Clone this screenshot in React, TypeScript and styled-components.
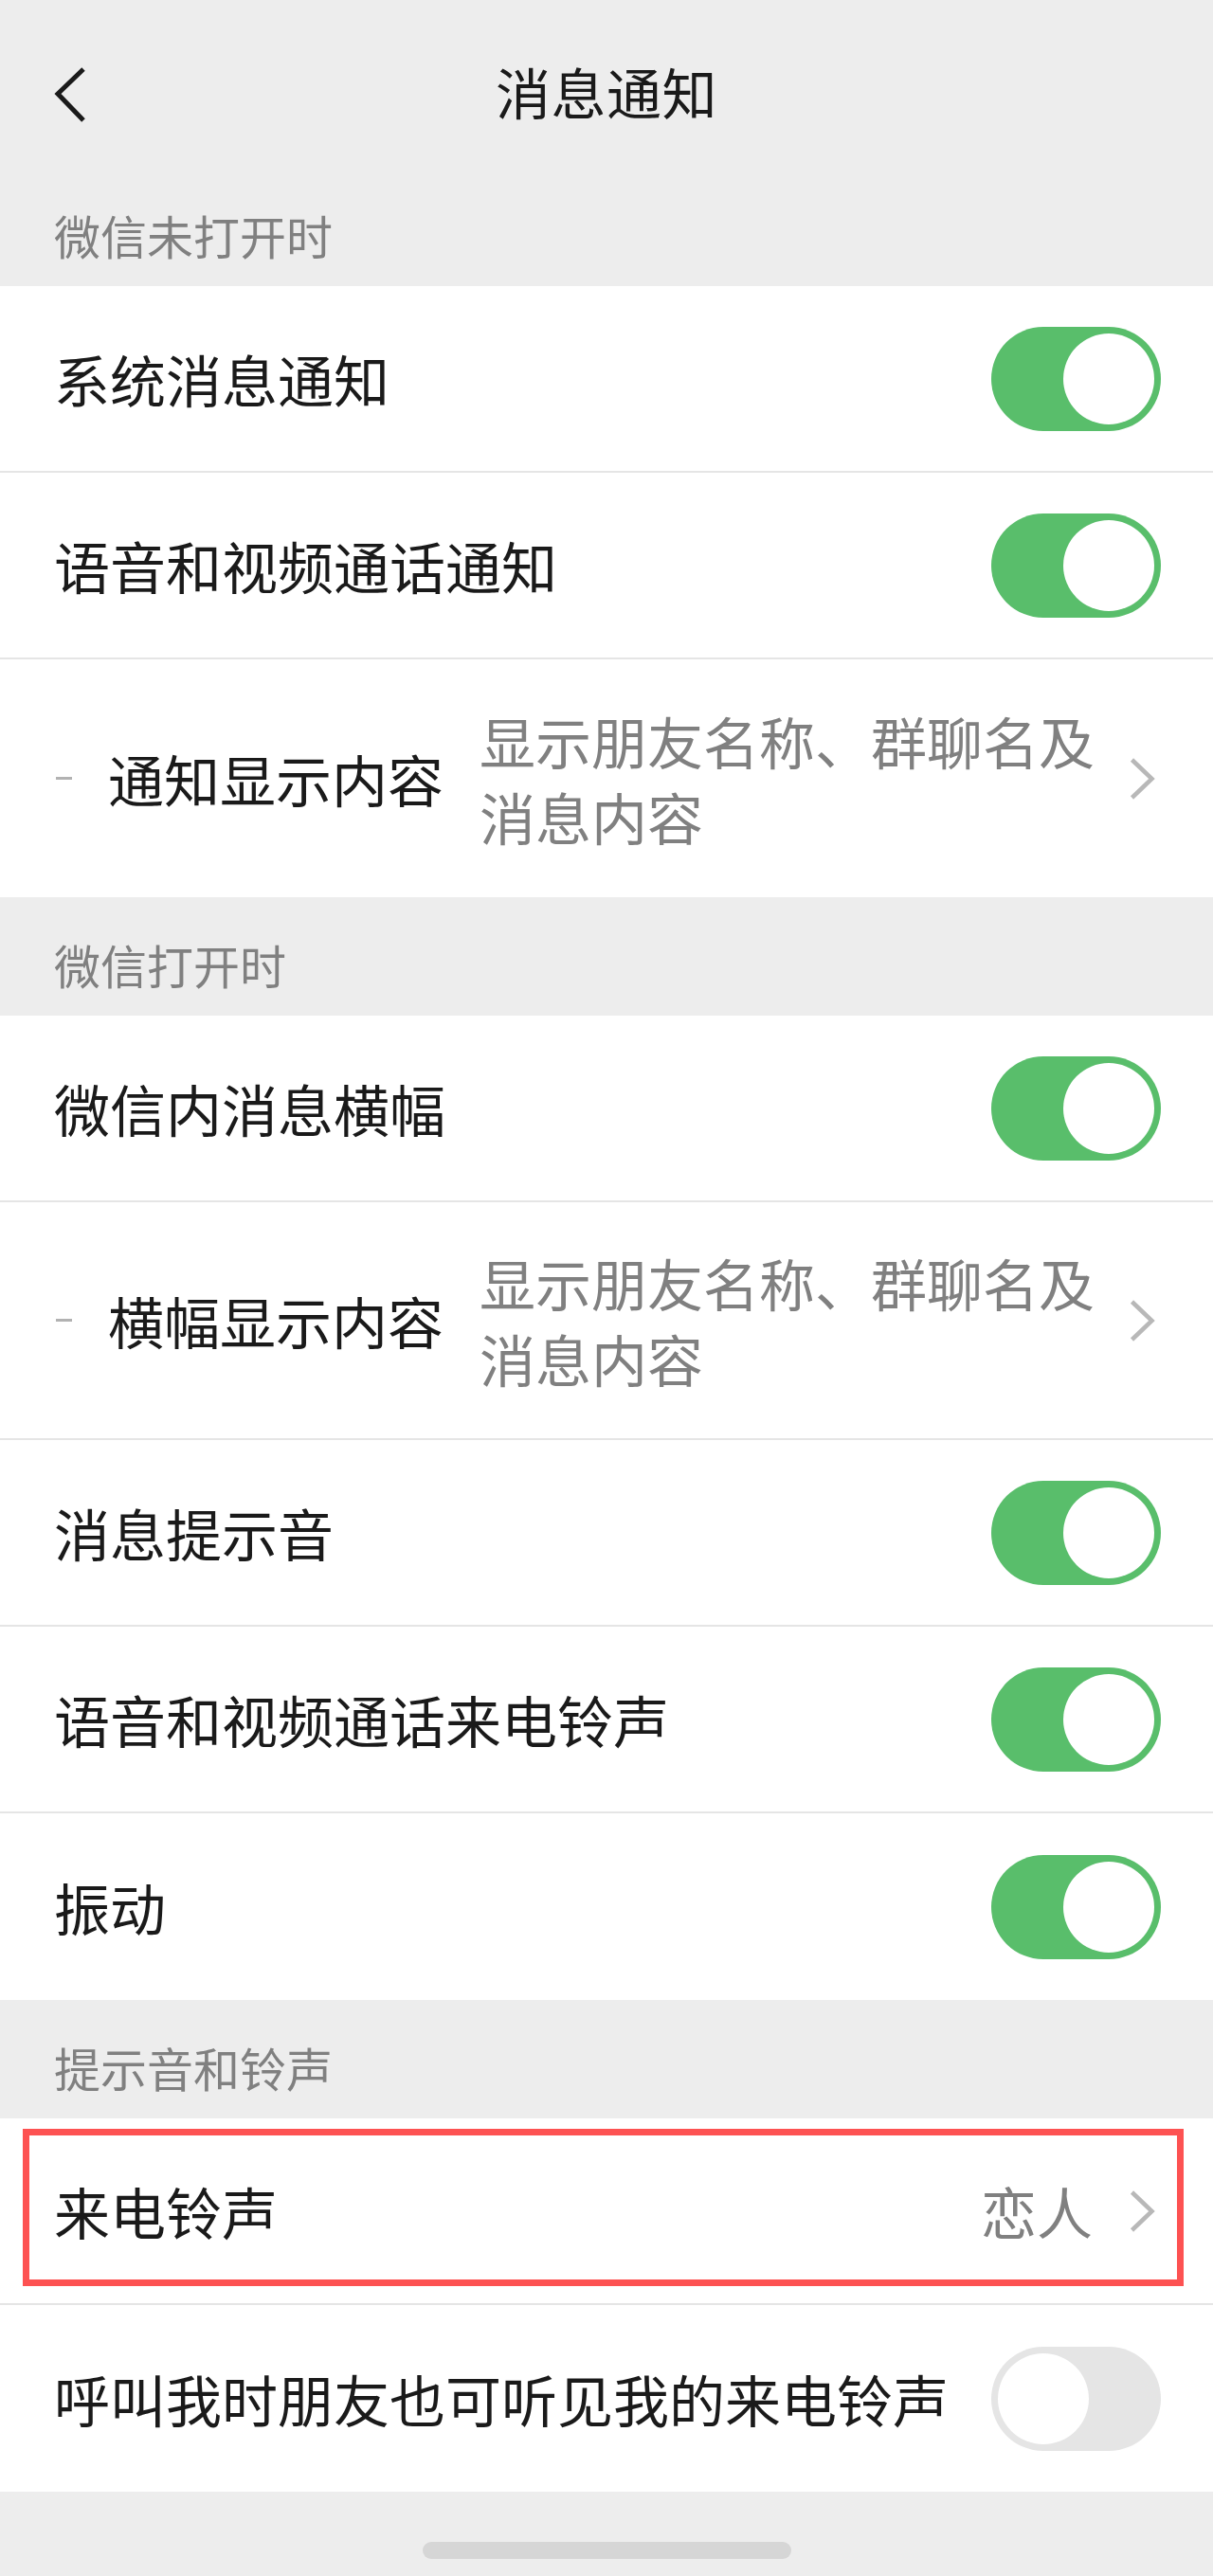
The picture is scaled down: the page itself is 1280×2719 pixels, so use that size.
import styled, { createGlobalStyle } from "styled-components"

const GlobalStyle = createGlobalStyle`
    html, body {
        margin: 0;
        padding: 0;
        background: #ededed;
    }
    * {
        box-sizing: border-box;
    }
`

const Page = styled.div`
    width: 1280px;
    min-height: 2719px;
    background: #ededed;
    font-family: "Noto Sans CJK SC", "Noto Sans", sans-serif;
    color: #1a1a1a;
`

const NavBar = styled.div`
    height: 177px;
    display: grid;
    grid-template-columns: 1fr auto 1fr;
    align-items: start;
    padding-top: 60px;
`

const BackButton = styled.svg`
    margin-left: 40px;
    display: block;
`

const Title = styled.div`
    font-size: 58px;
    line-height: 72px;
    letter-spacing: 0.5px;
`

const SectionHeader = styled.div`
    height: 125px;
    padding: 46px 0 0 57px;
    font-size: 49px;
    line-height: 49px;
    color: #808080;
`

const Group = styled.div`
    background: #ffffff;
`

const Row = styled.div<{ $tall?: boolean }>`
    position: relative;
    display: flex;
    align-items: center;
    min-height: ${p => (p.$tall ? 251 : 197)}px;
    padding: 0 55px 0 57px;
    border-bottom: 2px solid #e5e5e5;
    &:last-child {
        border-bottom: none;
    }
`

const Label = styled.div`
    font-size: 59px;
    line-height: 80px;
    white-space: nowrap;
`

const Dash = styled.span`
    width: 17px;
    height: 3px;
    margin: 0 38px 0 2px;
    background: #b2b2b2;
    flex-shrink: 0;
`

const Value = styled.div<{ $wide?: boolean }>`
    font-size: 59px;
    line-height: 80px;
    color: #808080;
    margin-left: ${p => (p.$wide ? "38px" : "auto")};
    width: ${p => (p.$wide ? "666px" : "auto")};
`

const Chevron = styled.svg<{ $auto?: boolean }>`
    display: block;
    flex-shrink: 0;
    margin-left: ${p => (p.$auto ? "auto" : "37px")};
    margin-right: 5px;
`

const Track = styled.div<{ $on: boolean }>`
    margin-left: auto;
    flex-shrink: 0;
    width: 179px;
    height: 110px;
    border-radius: 55px;
    padding: 7px;
    background: ${p => (p.$on ? "#59be6b" : "#e5e5e5")};
    display: flex;
    justify-content: ${p => (p.$on ? "flex-end" : "flex-start")};
    align-items: center;
`

const Knob = styled.div`
    width: 96px;
    height: 96px;
    border-radius: 50%;
    background: #ffffff;
`

const Highlight = styled.div`
    position: absolute;
    top: 11px;
    left: 24px;
    right: 31px;
    height: 166px;
    border: 7px solid #fd5252;
    pointer-events: none;
`

const Footer = styled.div`
    height: 91px;
    padding-top: 53px;
    display: flex;
    justify-content: center;
`

const HomeBar = styled.div`
    width: 389px;
    height: 18px;
    border-radius: 9px;
    background: #d6d6d6;
`

function Switch({ on }: { on: boolean }) {
    return (
        <Track $on={on}>
            <Knob />
        </Track>
    )
}

function Arrow({ auto }: { auto?: boolean }) {
    return (
        <Chevron $auto={auto} width="30" height="48" viewBox="0 0 30 48">
            <polyline points="4.5,4 25.5,24 4.5,44" fill="none" stroke="#b8b8b8" strokeWidth="4.5" />
        </Chevron>
    )
}

function ToggleRow({ label, on = true }: { label: string; on?: boolean }) {
    return (
        <Row>
            <Label>{label}</Label>
            <Switch on={on} />
        </Row>
    )
}

function DetailRow({ label }: { label: string }) {
    return (
        <Row $tall>
            <Dash />
            <Label>{label}</Label>
            <Value $wide>显示朋友名称、群聊名及消息内容</Value>
            <Arrow auto />
        </Row>
    )
}

export default function App() {
    return (
        <Page>
            <GlobalStyle />
            <NavBar>
                <BackButton width="60" height="72" viewBox="0 0 60 72">
                    <polyline points="48,13 21,39 48,67" fill="none" stroke="#1a1a1a" strokeWidth="5" />
                </BackButton>
                <Title>消息通知</Title>
                <div />
            </NavBar>

            <SectionHeader>微信未打开时</SectionHeader>
            <Group>
                <ToggleRow label="系统消息通知" />
                <ToggleRow label="语音和视频通话通知" />
                <DetailRow label="通知显示内容" />
            </Group>

            <SectionHeader>微信打开时</SectionHeader>
            <Group>
                <ToggleRow label="微信内消息横幅" />
                <DetailRow label="横幅显示内容" />
                <ToggleRow label="消息提示音" />
                <ToggleRow label="语音和视频通话来电铃声" />
                <ToggleRow label="振动" />
            </Group>

            <SectionHeader>提示音和铃声</SectionHeader>
            <Group>
                <Row>
                    <Label>来电铃声</Label>
                    <Value>恋人</Value>
                    <Arrow />
                    <Highlight />
                </Row>
                <ToggleRow label="呼叫我时朋友也可听见我的来电铃声" on={false} />
            </Group>

            <Footer>
                <HomeBar />
            </Footer>
        </Page>
    )
}
